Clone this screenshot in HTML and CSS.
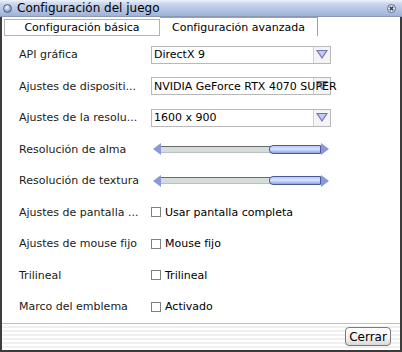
FILE: index.html
```html
<!DOCTYPE html>
<html lang="es">
<head>
    <meta charset="UTF-8">
    <title>Configuración del juego</title>
    <link rel="stylesheet" href="styles.css">
</head>
<body>
    <div class="window">
        <div class="titlebar">
            <span class="title-icon"></span>
            <span class="title-text">Configuración del juego</span>
            <span class="close-btn">
                <svg width="9" height="9" viewBox="0 0 9 9">
                    <circle cx="4.5" cy="4.5" r="4" fill="#dfe6f2" stroke="#5a6a8a" stroke-width="1"/>
                    <path d="M2.8 2.8 L6.2 6.2 M6.2 2.8 L2.8 6.2" stroke="#2a3550" stroke-width="1.3"/>
                </svg>
            </span>
        </div>

        <div class="tabs">
            <div class="tab">Configuración básica</div>
            <div class="tab active">Configuración avanzada</div>
            <div class="tab-fill"></div>
        </div>

        <div class="panel">
            <div class="row">
                <span class="label">API gráfica</span>
                <div class="select">
                    <span class="select-text">DirectX 9</span>
                    <span class="select-arrow"></span>
                </div>
            </div>
            <div class="row">
                <span class="label">Ajustes de dispositi...</span>
                <div class="select">
                    <span class="select-text">NVIDIA GeForce RTX 4070 SUPER</span>
                    <span class="select-arrow"></span>
                </div>
            </div>
            <div class="row">
                <span class="label">Ajustes de la resolu...</span>
                <div class="select">
                    <span class="select-text">1600 x 900</span>
                    <span class="select-arrow"></span>
                </div>
            </div>
            <div class="row">
                <span class="label">Resolución de alma</span>
                <div class="slider">
                    <span class="arrow-left"></span>
                    <div class="track"><span class="thumb"></span></div>
                    <span class="arrow-right"></span>
                </div>
            </div>
            <div class="row">
                <span class="label">Resolución de textura</span>
                <div class="slider">
                    <span class="arrow-left"></span>
                    <div class="track"><span class="thumb"></span></div>
                    <span class="arrow-right"></span>
                </div>
            </div>
            <div class="row">
                <span class="label">Ajustes de pantalla ...</span>
                <label class="check"><span class="box"></span>Usar pantalla completa</label>
            </div>
            <div class="row">
                <span class="label">Ajustes de mouse fijo</span>
                <label class="check"><span class="box"></span>Mouse fijo</label>
            </div>
            <div class="row">
                <span class="label">Trilineal</span>
                <label class="check"><span class="box"></span>Trilineal</label>
            </div>
            <div class="row">
                <span class="label">Marco del emblema</span>
                <label class="check"><span class="box"></span>Activado</label>
            </div>
        </div>

        <div class="footer">
            <button class="close-button">Cerrar</button>
        </div>
    </div>
</body>
</html>
```

FILE: styles.css
```css
body {
    margin: 0;
    font-family: "DejaVu Sans", Verdana, sans-serif;
    font-size: 11px;
    color: #000;
    background: #fff;
}
.window {
    width: 402px;
    height: 352px;
    box-sizing: border-box;
    border: 2px solid #3c3c3c;
    border-top: none;
    display: flex;
    flex-direction: column;
    background: #fff;
}
.titlebar {
    height: 17px;
    margin: 0 -2px;
    display: flex;
    align-items: center;
    padding: 0 5px 0 3px;
    background: linear-gradient(to bottom, #eef2fa 0%, #c9d5ec 25%, #b3c4e4 60%, #9fb2d8 100%);
    border-bottom: 1px solid #8a98b8;
}
.title-icon {
    width: 7px;
    height: 7px;
    border-radius: 50%;
    border: 1px solid #56627a;
    background: radial-gradient(circle at 40% 35%, #ffffff 0%, #a8b8e0 45%, #5a70b0 100%);
    margin-right: 5px;
}
.title-text {
    flex: 1;
    font-size: 12px;
    color: #000;
}
.close-btn {
    display: flex;
    margin-right: 1px;
}
.tabs {
    height: 19px;
    display: flex;
    align-items: flex-end;
    padding-left: 2px;
}
.tab {
    height: 17px;
    box-sizing: border-box;
    width: 156px;
    border: 1px solid #b4b4b4;
    border-bottom: 1px solid #b4b4b4;
    display: flex;
    align-items: center;
    justify-content: center;
    background: #fff;
}
.tab.active {
    height: 19px;
    width: 158px;
    border-bottom: none;
    border-left: none;
    border-color: #a0a0a0;
}
.tab-fill {
    flex: 1;
}
.panel {
    flex: 1;
    padding: 3px 0 0 17px;
    display: flex;
    flex-direction: column;
}
.row {
    height: 31.5px;
    display: flex;
    align-items: center;
}
.label {
    width: 132px;
    white-space: nowrap;
    color: #1a1a1a;
}
.select {
    position: relative;
    width: 180px;
    height: 18px;
    box-sizing: border-box;
    border: 1px solid #b8b8b8;
    background: #fff;
    display: flex;
    align-items: center;
}
.select-text {
    position: relative;
    z-index: 1;
    padding-left: 2px;
    white-space: nowrap;
}
.select-arrow {
    position: absolute;
    right: 0;
    top: 0;
    width: 17px;
    height: 16px;
    box-sizing: border-box;
    border-left: 1px solid #d0d0d0;
    background: #f4f4f6;
}
.select-arrow::before {
    content: "";
    position: absolute;
    left: 2px;
    top: 3px;
    width: 0;
    height: 0;
    border-left: 6px solid transparent;
    border-right: 6px solid transparent;
    border-top: 9px solid #6e74b8;
}
.select-arrow::after {
    content: "";
    position: absolute;
    left: 4px;
    top: 4px;
    width: 0;
    height: 0;
    border-left: 4px solid transparent;
    border-right: 4px solid transparent;
    border-top: 6px solid #c4c9f0;
}
.slider {
    display: flex;
    align-items: center;
    width: 176px;
    margin-left: 2px;
}
.arrow-left, .arrow-right {
    width: 0;
    height: 0;
    border-top: 6px solid transparent;
    border-bottom: 6px solid transparent;
}
.arrow-left {
    border-right: 8px solid #8a98d8;
}
.arrow-right {
    border-left: 8px solid #8a98d8;
}
.track {
    flex: 1;
    height: 7px;
    box-sizing: border-box;
    background: #d4dcdc;
    border-top: 1px solid #6a6a6a;
    border-bottom: 1px solid #b8c0c0;
    display: flex;
    justify-content: flex-end;
    align-items: center;
}
.thumb {
    width: 52px;
    height: 9px;
    box-sizing: border-box;
    border: 1px solid #4a5a98;
    border-radius: 4px 0 0 4px;
    background: linear-gradient(to bottom, #b8c8f4 0%, #d8e4ff 45%, #8ea4e4 100%);
}
.check {
    display: flex;
    align-items: center;
    white-space: nowrap;
}
.box {
    width: 10px;
    height: 10px;
    box-sizing: border-box;
    border: 1px solid #808080;
    background: #fff;
    margin: 0 4px 0 0;
}
.footer {
    height: 28px;
    border-top: 1px solid #c0c0c0;
    display: flex;
    align-items: center;
    justify-content: flex-end;
    padding-right: 9px;
    background: repeating-linear-gradient(to bottom, #ffffff 0px, #ffffff 2px, #f0f0f0 2px, #f0f0f0 4px);
}
.close-button {
    font-family: "DejaVu Sans", Verdana, sans-serif;
    font-size: 12px;
    height: 19px;
    width: 46px;
    padding: 0;
    border: 1px solid #7a7a7a;
    border-radius: 4px;
    background: linear-gradient(to bottom, #ffffff 0%, #f2f2f2 60%, #d8d8d8 100%);
    color: #000;
}
```
